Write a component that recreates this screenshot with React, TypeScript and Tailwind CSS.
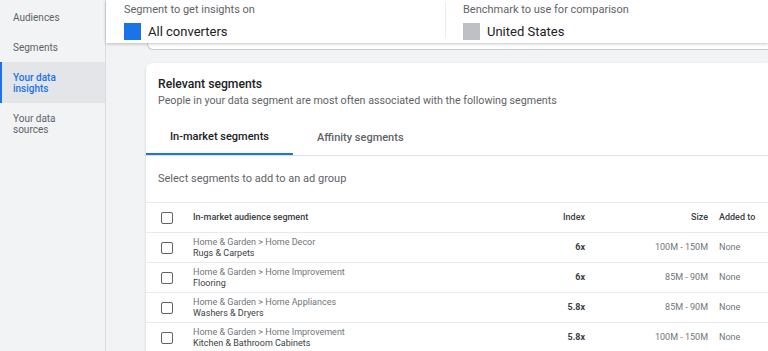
import { JSX } from 'react'

type Row = {
  path: string
  name: string
  index: string
  size: string
}

const rows: Row[] = [
  { path: 'Home & Garden > Home Decor', name: 'Rugs & Carpets', index: '6x', size: '100M - 150M' },
  { path: 'Home & Garden > Home Improvement', name: 'Flooring', index: '6x', size: '85M - 90M' },
  { path: 'Home & Garden > Home Appliances', name: 'Washers & Dryers', index: '5.8x', size: '85M - 90M' },
  {
    path: 'Home & Garden > Home Improvement',
    name: 'Kitchen & Bathroom Cabinets',
    index: '5.8x',
    size: '100M - 150M'
  }
]

function Checkbox(): JSX.Element {
  return <div className="h-[12px] w-[12px] rounded-[2px] border-[1.5px] border-[#5f6368]" />
}

function Sidebar(): JSX.Element {
  return (
    <div className="flex w-[106px] shrink-0 flex-col border-r border-[#dadce0] bg-[#f1f3f4] pt-[2px] text-[10px] leading-[11px] text-[#5f6368]">
      <div className="flex h-[30px] items-center px-[13px]">Audiences</div>
      <div className="flex h-[30px] items-center px-[13px]">Segments</div>
      <div className="flex h-[41px] items-center border-l-[2px] border-[#1a73e8] bg-[#e3e5e8] pl-[11px] font-medium text-[#1a73e8]">
        Your data
        <br />
        insights
      </div>
      <div className="flex h-[41px] items-center px-[13px]">
        Your data
        <br />
        sources
      </div>
    </div>
  )
}

function TopCard(): JSX.Element {
  return (
    <div className="relative z-10 flex h-[43px] shrink-0 bg-white shadow-[0_1px_3px_rgba(60,64,67,0.3)]">
      <div className="flex w-[339px] flex-col pl-[18px] pt-[3px]">
        <div className="text-[11px] leading-[14px] text-[#5f6368]">Segment to get insights on</div>
        <div className="mt-[5px] flex items-center gap-[7px]">
          <div className="h-[17px] w-[17px] bg-[#1a73e8]" />
          <span className="text-[13px] text-[#202124]">All converters</span>
        </div>
      </div>
      <div className="my-[2px] h-[36px] w-px bg-[#e8eaed]" />
      <div className="flex flex-col pl-[17px] pt-[3px]">
        <div className="text-[11px] leading-[14px] text-[#5f6368]">Benchmark to use for comparison</div>
        <div className="mt-[5px] flex items-center gap-[7px]">
          <div className="h-[17px] w-[17px] bg-[#bdc1c6]" />
          <span className="text-[13px] text-[#202124]">United States</span>
        </div>
      </div>
    </div>
  )
}

export default function App(): JSX.Element {
  return (
    <div
      className="flex h-[351px] w-[768px] overflow-hidden bg-[#f1f3f4]"
      style={{ fontFamily: 'Roboto, "Noto Sans", Arial, sans-serif' }}
    >
      <Sidebar />
      <div className="flex min-w-0 flex-1 flex-col">
        <TopCard />
        <div className="ml-[41px] h-[7px] shrink-0 rounded-bl-[6px] border-b border-l border-[#c8cacd] bg-white" />
        <div className="ml-[40px] mt-[13px] flex-1 rounded-tl-[6px] bg-white shadow-[0_1px_2px_rgba(60,64,67,0.3)]">
          <div className="px-[12px] pt-[13px]">
            <div className="text-[12.2px] font-medium leading-[16px] text-[#202124]">Relevant segments</div>
            <div className="mt-[2px] text-[10.7px] leading-[14px] text-[#5f6368]">
              People in your data segment are most often associated with the following segments
            </div>
          </div>
          <div className="mt-[13px] flex border-b border-[#e0e0e0] text-[11px]">
            <div className="flex h-[34px] w-[147px] items-center justify-center border-b-[2px] border-[#1a73e8] font-medium text-[#202124]">
              In-market segments
            </div>
            <div className="flex h-[34px] items-center pl-[24px] font-medium text-[#5f6368]">Affinity segments</div>
          </div>
          <div className="flex h-[47px] items-center border-b border-[#e8eaed] px-[12px] text-[11px] text-[#5f6368]">
            Select segments to add to an ad group
          </div>
          <div className="flex h-[30px] items-center border-b border-[#e8eaed] text-[9px] font-medium text-[#3c4043]">
            <div className="flex w-[47px] pl-[15px]">
              <Checkbox />
            </div>
            <div className="flex-1">In-market audience segment</div>
            <div className="w-[80px] text-right">Index</div>
            <div className="w-[123px] text-right">Size</div>
            <div className="w-[60px] pl-[11px] whitespace-nowrap">Added to</div>
          </div>
          {rows.map((row) => (
            <div key={row.name} className="flex h-[30px] items-center border-b border-[#e8eaed] text-[9px]">
              <div className="flex w-[47px] pl-[15px]">
                <Checkbox />
              </div>
              <div className="flex-1 leading-[11px]">
                <div className="text-[#70757a]">{row.path}</div>
                <div className="text-[#3c4043]">{row.name}</div>
              </div>
              <div className="w-[80px] text-right font-bold text-[#3c4043]">{row.index}</div>
              <div className="w-[123px] text-right text-[#70757a]">{row.size}</div>
              <div className="w-[60px] pl-[11px] text-[#70757a]">None</div>
            </div>
          ))}
        </div>
      </div>
    </div>
  )
}
